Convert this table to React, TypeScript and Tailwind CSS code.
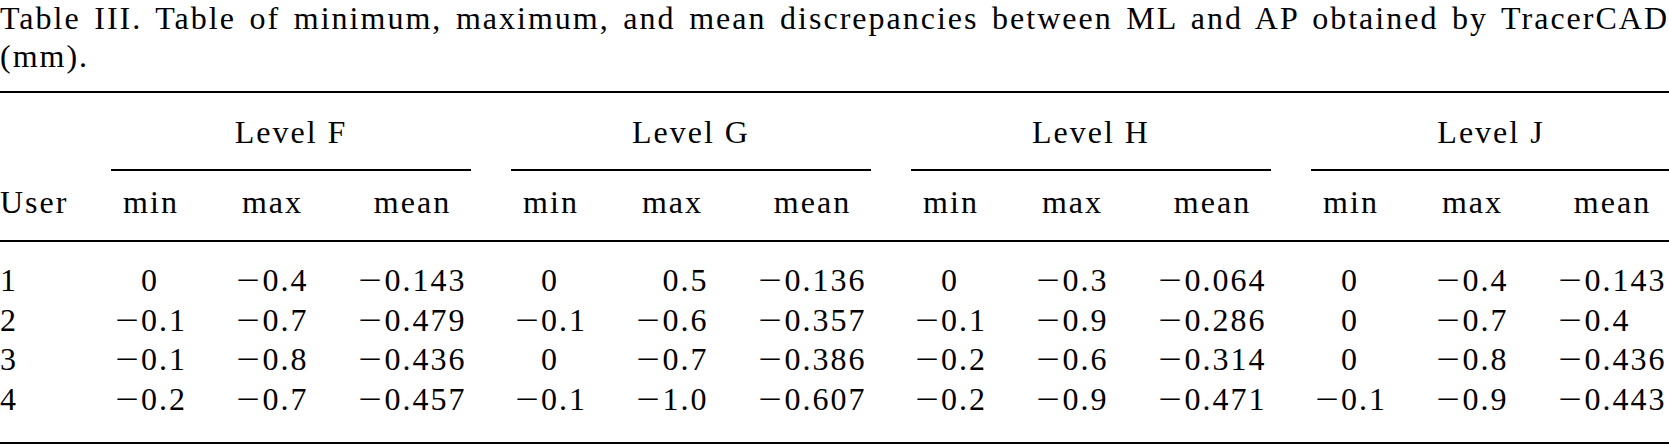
const levels = ['F', 'G', 'H', 'J'];

const subCols = [
  { label: 'min', width: 'w-[80px]' },
  { label: 'max', width: 'w-[163px]' },
  { label: 'mean', width: 'w-[117px]' },
];

// values[level][column] per user
const rows = [
  { user: '1', values: [['0', '-0.4', '-0.143'], ['0', '0.5', '-0.136'], ['0', '-0.3', '-0.064'], ['0', '-0.4', '-0.143']] },
  { user: '2', values: [['-0.1', '-0.7', '-0.479'], ['-0.1', '-0.6', '-0.357'], ['-0.1', '-0.9', '-0.286'], ['0', '-0.7', '-0.4']] },
  { user: '3', values: [['-0.1', '-0.8', '-0.436'], ['0', '-0.7', '-0.386'], ['-0.2', '-0.6', '-0.314'], ['0', '-0.8', '-0.436']] },
  { user: '4', values: [['-0.2', '-0.7', '-0.457'], ['-0.1', '-1.0', '-0.607'], ['-0.2', '-0.9', '-0.471'], ['-0.1', '-0.9', '-0.443']] },
];

// one decimal-aligned value: integer part right, fraction left
function DecimalCell({ value }: { value: string }) {
  const negative = value.startsWith('-');
  const [whole, frac] = (negative ? value.slice(1) : value).split('.');
  return (
    <>
      <span className="text-right whitespace-nowrap">
        {negative && <span className="inline-block origin-left scale-x-[1.3] mr-[6px]">−</span>}
        {whole}
      </span>
      <span className="text-left whitespace-nowrap">{frac ? `.${frac}` : ''}</span>
    </>
  );
}

export default function App() {
  return (
    <div className="w-[1669px] h-[446px] overflow-hidden bg-white text-black font-['Liberation_Serif','Times_New_Roman',serif] text-[32px] tracking-[2px]">
      {/* Caption */}
      <p className="leading-[36px] text-justify [text-align-last:justify]">
        Table III. Table of minimum, maximum, and mean discrepancies between ML and AP obtained by TracerCAD
      </p>
      <p className="leading-[40px]">(mm).</p>

      <div className="mt-[15px] border-t-2 border-black">
        {/* Level headers */}
        <div className="flex pt-[19px] leading-[40px]">
          <div className="w-[111px] shrink-0" />
          <div className="flex gap-10">
            {levels.map((level) => (
              <div key={level} className="w-[360px] shrink-0 text-center border-b-2 border-black pb-[17px]">
                Level {level}
              </div>
            ))}
          </div>
        </div>

        {/* Column headers */}
        <div className="flex mt-[11px] leading-[40px] border-b-2 border-black pb-[18px]">
          <div className="w-[111px] shrink-0">User</div>
          <div className="flex gap-10">
            {levels.map((level) => (
              <div key={level} className="flex w-[360px] shrink-0">
                {subCols.map((col) => (
                  <div key={col.label} className={`${col.width} shrink-0 text-center`}>
                    {col.label}
                  </div>
                ))}
              </div>
            ))}
          </div>
        </div>

        {/* Body */}
        <div className="flex pt-[19px] pb-[23px] leading-[39.5px] border-b-2 border-black">
          <div className="w-[111px] shrink-0">
            {rows.map((row) => (
              <div key={row.user}>{row.user}</div>
            ))}
          </div>
          <div className="flex gap-10">
            {levels.map((level, li) => (
              <div key={level} className="flex w-[360px] shrink-0">
                {subCols.map((col, ci) => (
                  <div key={col.label} className={`${col.width} shrink-0 flex justify-center`}>
                    <div className="grid grid-cols-[auto_auto]">
                      {rows.map((row) => (
                        <DecimalCell key={row.user} value={row.values[li][ci]} />
                      ))}
                    </div>
                  </div>
                ))}
              </div>
            ))}
          </div>
        </div>
      </div>
    </div>
  );
}
